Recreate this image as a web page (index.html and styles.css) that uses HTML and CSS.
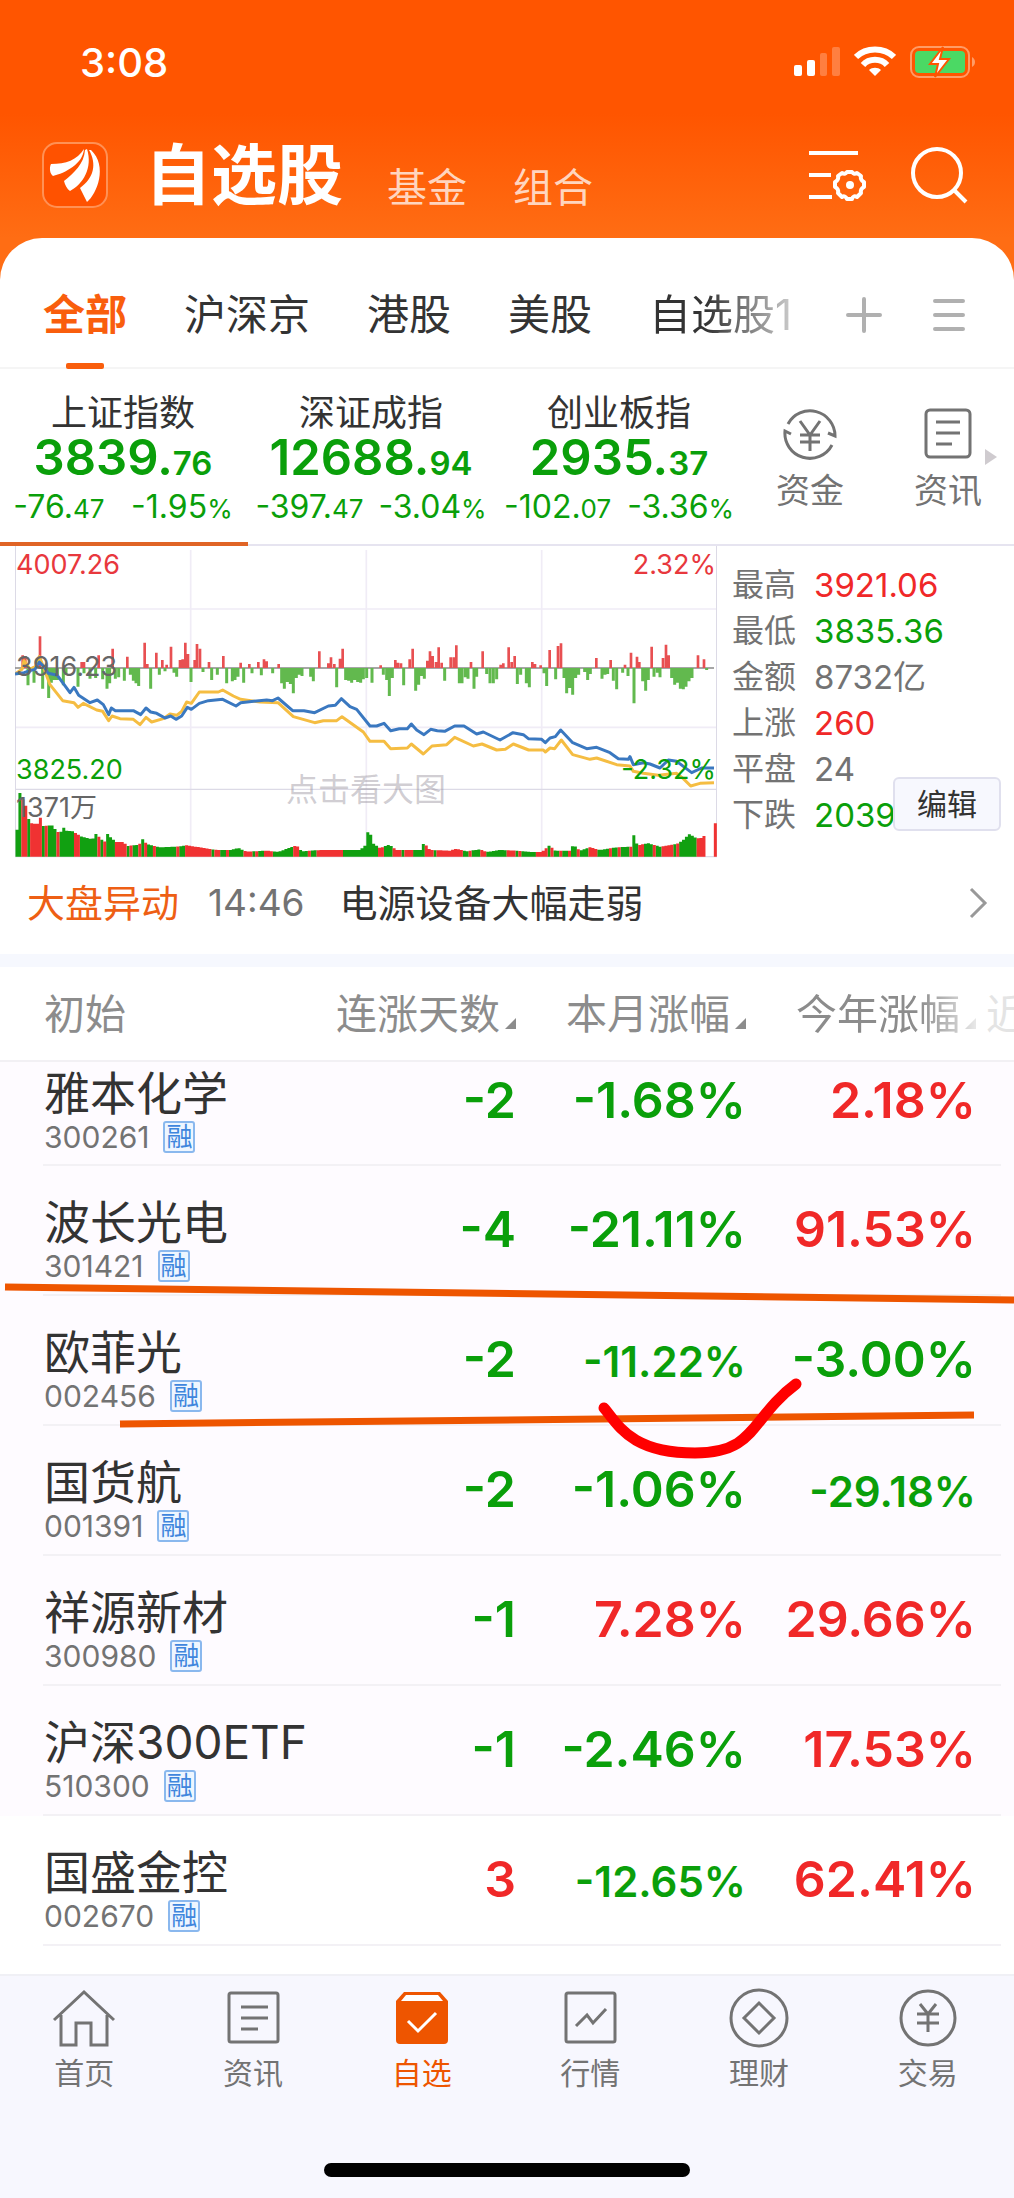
FILE: index.html
```
<!DOCTYPE html>
<html lang="zh-CN">

<head>
    <meta charset="UTF-8">
    <meta name="viewport" content="width=device-width, initial-scale=1.0">
    <title>自选股</title>
    <link rel="stylesheet" href="styles.css">
</head>

<body>
    <header class="app-header">
        <div class="status-bar">
            <span class="time">3:08</span>
            <div class="status-icons">
                <svg width="46" height="30" viewBox="0 0 46 30" fill="#fff">
                    <rect x="0" y="19" width="8" height="11" rx="2" />
                    <rect x="13" y="14" width="8" height="16" rx="2" />
                    <rect x="26" y="7" width="7" height="23" rx="2" opacity=".25" />
                    <rect x="38" y="1" width="8" height="29" rx="2" opacity=".25" />
                </svg>
                <svg width="42" height="30" viewBox="0 0 42 30" fill="none" stroke="#fff" stroke-width="6">
                    <path d="M2 11C12 1 30 1 40 11" />
                    <path d="M9 19C15 12 27 12 33 19" />
                    <path d="M15 24C18 21 24 21 27 24L21 30Z" fill="#fff" stroke="none" />
                </svg>
                <svg width="66" height="32" viewBox="0 0 66 32">
                    <rect x="1" y="1" width="58" height="30" rx="8" fill="none" stroke="#ff9c66" stroke-width="2" />
                    <rect x="5" y="5" width="50" height="22" rx="4" fill="#4bd964" />
                    <path d="M62 11c4 2 4 8 0 10z" fill="#ff9c66" />
                    <path d="M33 1L20 18h8l-3 13L39 13h-9z" fill="#fff" stroke="#ff5500" stroke-width="2" />
                </svg>
            </div>
        </div>
        <div class="title-bar">
            <svg class="logo" width="66" height="66" viewBox="0 0 66 66">
                <rect x="1" y="1" width="64" height="64" rx="14" fill="#ff5200" stroke="#ff9155" stroke-width="2" />
                <g fill="#fff">
                    <path d="M42 7C41 22 23 31 11 34C8 32 7 26 9 22C24 22 35 18 42 7Z" />
                    <path d="M43 8C42 22 32 31 22 39C23 43 25 47 28 49C41 42 51 26 45 7Z" />
                    <path d="M47 8C55 22 52 36 38 46L45 60C55 52 66 24 49 8Z" />
                </g>
            </svg>
            <h1>自选股</h1>
            <a class="switch" href="#">基金</a>
            <a class="switch" href="#">组合</a>
            <button class="icon-btn push" aria-label="列表设置">
                <svg width="58" height="54" viewBox="0 0 58 54" fill="none" stroke="#fff" stroke-width="4">
                    <path d="M1 5h49M1 27h22M1 49h23" />
                    <path d="M34 25q3 2 5-1h5q2 3 5 1l4 3q-1 4 3 6v5q-4 2-3 6l-4 4q-4-2-5 2h-5q-2-4-5-2l-4-4q1-4-3-6v-5q4-2 3-6z" stroke-linejoin="round" />
                    <circle cx="42" cy="37" r="4" fill="#fff" stroke="none" />
                </svg>
            </button>
            <button class="icon-btn" aria-label="搜索">
                <svg width="58" height="58" viewBox="0 0 58 58" fill="none" stroke="#fff" stroke-width="4">
                    <circle cx="27" cy="27" r="24" />
                    <path d="M44 44l12 12" />
                </svg>
            </button>
        </div>
    </header>

    <main class="panel">
        <nav class="tabs">
            <a class="tab active" href="#">全部</a>
            <a class="tab" href="#">沪深京</a>
            <a class="tab" href="#">港股</a>
            <a class="tab" href="#">美股</a>
            <a class="tab fade" href="#">自选股1</a>
            <button class="icon-btn push" aria-label="添加分组">
                <svg width="36" height="36" viewBox="0 0 36 36" stroke="#b0b0b0" stroke-width="4" stroke-linecap="round">
                    <path d="M18 2v32M2 18h32" />
                </svg>
            </button>
            <button class="icon-btn" aria-label="分组菜单">
                <svg width="34" height="36" viewBox="0 0 34 36" stroke="#b0b0b0" stroke-width="4" stroke-linecap="round">
                    <path d="M3 4h28M3 18h28M3 32h28" />
                </svg>
            </button>
        </nav>

        <section class="indices">
            <div class="index current">
                <h2>上证指数</h2>
                <p class="price">3839.<small>76</small></p>
                <p class="change"><span>-76.<small>47</small></span><span>-1.95<small>%</small></span></p>
            </div>
            <div class="index">
                <h2>深证成指</h2>
                <p class="price">12688.<small>94</small></p>
                <p class="change"><span>-397.<small>47</small></span><span>-3.04<small>%</small></span></p>
            </div>
            <div class="index">
                <h2>创业板指</h2>
                <p class="price">2935.<small>37</small></p>
                <p class="change"><span>-102.<small>07</small></span><span>-3.36<small>%</small></span></p>
            </div>
            <div class="shortcuts">
                <a href="#">
                    <svg width="54" height="54" viewBox="0 0 54 54" fill="none" stroke="#737373" stroke-width="3">
                        <path d="M5 17A25 25 0 0 1 52 29L45 26M49 38A25 25 0 0 1 2 24L8 27" />
                        <path d="M17 14l10 14 10-14M27 28v16M17 28h20M17 35h20" />
                    </svg>
                    资金
                </a>
                <a href="#">
                    <svg width="48" height="54" viewBox="0 0 48 54" fill="none" stroke="#737373" stroke-width="3">
                        <rect x="2" y="3" width="44" height="47" rx="4" />
                        <path d="M12 15h24M12 26h24M12 37h16" />
                    </svg>
                    资讯
                </a>
                <span class="more"></span>
            </div>
        </section>

        <section class="market">
            <div class="chart">
                <svg id="chart" viewBox="45 18 2106 936" preserveAspectRatio="none">
                    <path class="grid" d="M45 207H2151M45 562H2151M572 30V950M1099 30V950M1625 30V950" />
                    <path class="frame" d="M46 18V950H2150V18M45 748H2151" />
                    <path class="zero" d="M45 384H2142" />
                    <g id="volume"></g>
                    <g id="momentum"></g>
                    <polyline class="avg" points="45,402 66,388 72,362 90,388 105,380 118,350 130,380 150,434 188,482 222,488 234,502 250,490 290,510 308,514 326,542 336,528 360,536 400,538 420,554 438,532 455,546 490,536 510,522 530,526 545,514 560,486 574,490 598,456 655,456 668,450 700,468 722,478 780,486 834,488 880,530 944,548 970,542 1010,542 1026,530 1090,576 1110,604 1152,604 1172,626 1222,624 1234,612 1270,642 1296,618 1340,614 1364,592 1420,618 1446,612 1490,630 1516,628 1540,612 1586,630 1630,630 1636,636 1650,624 1664,626 1684,600 1718,644 1770,658 1790,654 1850,674 1890,678 1900,694 1930,700 1975,706 2030,700 2050,716 2072,738 2100,730 2142,728" />
                    <polyline class="now" points="45,402 72,398 90,392 105,388 118,366 130,378 145,400 172,406 210,458 222,442 236,466 270,488 292,480 310,494 326,524 334,504 346,512 400,512 422,524 438,504 452,516 470,520 495,534 512,528 528,538 545,528 562,502 574,508 598,490 625,482 668,478 708,498 722,488 800,480 818,482 834,474 878,512 912,512 944,518 985,498 1006,496 1024,476 1050,500 1070,508 1110,558 1130,558 1152,550 1172,572 1198,566 1222,566 1234,552 1250,570 1272,584 1292,568 1312,572 1334,574 1364,558 1392,558 1430,582 1450,576 1500,600 1539,578 1570,584 1585,596 1625,598 1636,608 1650,594 1666,590 1682,570 1718,608 1760,626 1790,622 1830,638 1855,656 1885,658 1890,650 1900,674 1930,668 1950,672 1980,684 2005,660 2030,664 2075,698 2105,684 2142,684" />
                </svg>
                <span class="label top up">4007.26</span>
                <span class="label top right up">2.32%</span>
                <span class="label middle">3916.23</span>
                <span class="label low down">3825.20</span>
                <span class="label low right down">-2.32%</span>
                <span class="label vol">1371万</span>
                <span class="hint">点击看大图</span>
            </div>
            <dl class="stats">
                <div><dt>最高</dt><dd class="up">3921.06</dd></div>
                <div><dt>最低</dt><dd class="down">3835.36</dd></div>
                <div><dt>金额</dt><dd>8732亿</dd></div>
                <div><dt>上涨</dt><dd class="up">260</dd></div>
                <div><dt>平盘</dt><dd>24</dd></div>
                <div><dt>下跌</dt><dd class="down">2039</dd></div>
            </dl>
            <button class="edit">编辑</button>
        </section>

        <a class="news" href="#">
            <strong>大盘异动</strong>
            <time>14:46</time>
            <span>电源设备大幅走弱</span>
            <svg class="push" width="20" height="34" viewBox="0 0 20 34" fill="none" stroke="#999" stroke-width="3">
                <path d="M3 3l14 14L3 31" />
            </svg>
        </a>

        <section class="watchlist">
            <table>
                <thead>
                    <tr>
                        <th class="name">初始</th>
                        <th>连涨天数<i class="sort"></i></th>
                        <th>本月涨幅<i class="sort"></i></th>
                        <th class="fade">今年涨幅<i class="sort"></i></th>
                        <th class="next">近</th>
                    </tr>
                </thead>
                <tbody>
                    <tr>
                        <td class="name"><b>雅本化学</b><span class="code">300261 <em>融</em></span></td>
                        <td class="down">-2</td>
                        <td class="down">-1.68%</td>
                        <td class="up">2.18%</td>
                        <td></td>
                    </tr>
                    <tr>
                        <td class="name"><b>波长光电</b><span class="code">301421 <em>融</em></span></td>
                        <td class="down">-4</td>
                        <td class="down">-21.11%</td>
                        <td class="up">91.53%</td>
                        <td></td>
                    </tr>
                    <tr>
                        <td class="name"><b>欧菲光</b><span class="code">002456 <em>融</em></span></td>
                        <td class="down">-2</td>
                        <td class="down"><small>-11.22%</small></td>
                        <td class="down">-3.00%</td>
                        <td></td>
                    </tr>
                    <tr>
                        <td class="name"><b>国货航</b><span class="code">001391 <em>融</em></span></td>
                        <td class="down">-2</td>
                        <td class="down">-1.06%</td>
                        <td class="down"><small>-29.18%</small></td>
                        <td></td>
                    </tr>
                    <tr>
                        <td class="name"><b>祥源新材</b><span class="code">300980 <em>融</em></span></td>
                        <td class="down">-1</td>
                        <td class="up">7.28%</td>
                        <td class="up">29.66%</td>
                        <td></td>
                    </tr>
                    <tr>
                        <td class="name"><b>沪深300ETF</b><span class="code">510300 <em>融</em></span></td>
                        <td class="down">-1</td>
                        <td class="down">-2.46%</td>
                        <td class="up">17.53%</td>
                        <td></td>
                    </tr>
                    <tr>
                        <td class="name"><b>国盛金控</b><span class="code">002670 <em>融</em></span></td>
                        <td class="up">3</td>
                        <td class="down"><small>-12.65%</small></td>
                        <td class="up">62.41%</td>
                        <td></td>
                    </tr>
                </tbody>
            </table>
            <!-- hand-drawn marks over the list -->
            <svg class="marks" viewBox="0 0 1014 200" preserveAspectRatio="none" fill="none">
                <path d="M5 27L1014 40" stroke="#ee5500" stroke-width="7" />
                <path d="M120 164L974 155" stroke="#ee5500" stroke-width="7" />
                <path d="M604 148C618 164 630 193 695 193C757 193 750 158 796 124" stroke="#ff0000" stroke-width="11" stroke-linecap="round" />
            </svg>
        </section>
    </main>

    <footer class="bottom">
        <nav class="bottom-nav">
            <a href="#">
                <svg width="64" height="62" viewBox="0 0 64 62" fill="none" stroke="#737373" stroke-width="3">
                    <path d="M2 32L32 4L62 32M9 27V57H24V35H39V57H55V27" />
                </svg>
                首页
            </a>
            <a href="#">
                <svg width="64" height="62" viewBox="0 0 64 62" fill="none" stroke="#737373" stroke-width="3">
                    <rect x="8" y="5" width="49" height="49" rx="2" />
                    <path d="M20 19h27M20 30h27M20 41h17" />
                </svg>
                资讯
            </a>
            <a class="active" href="#">
                <svg width="64" height="62" viewBox="0 0 64 62">
                    <path d="M14 4H50L58 13V52Q58 56 54 56H10Q6 56 6 52V13Z" fill="#ee5500" />
                    <path d="M16 7H48L53 13H11Z" fill="#fff" />
                    <path d="M18 33L28 43L46 25" fill="none" stroke="#fff" stroke-width="3" />
                </svg>
                自选
            </a>
            <a href="#">
                <svg width="64" height="62" viewBox="0 0 64 62" fill="none" stroke="#737373" stroke-width="3">
                    <rect x="8" y="5" width="49" height="49" rx="2" />
                    <path d="M18 38L29 27L35 35L48 21" />
                </svg>
                行情
            </a>
            <a href="#">
                <svg width="64" height="62" viewBox="0 0 64 62" fill="none" stroke="#737373" stroke-width="3">
                    <circle cx="32" cy="30" r="28" />
                    <path d="M32 15L47 30L32 45L17 30Z" />
                </svg>
                理财
            </a>
            <a href="#">
                <svg width="64" height="62" viewBox="0 0 64 62" fill="none" stroke="#737373" stroke-width="3">
                    <circle cx="32" cy="30" r="27" />
                    <path d="M24 16L32 26L40 16M32 26V44M21 26H43M21 35H43" />
                </svg>
                交易
            </a>
        </nav>
        <div class="home-indicator"></div>
    </footer>

    <script src="chart.js"></script>
</body>

</html>
```
FILE: styles.css
```
* {
    box-sizing: border-box;
}

body {
    margin: 0;
    min-height: 100vh;
    display: flex;
    flex-direction: column;
    background-color: #f7f7fe;
    font-family: Inter, "Noto Sans CJK SC", sans-serif;
    color: #333;
}

h1,
h2,
p,
dl,
dd {
    margin: 0;
    font-weight: normal;
}

a {
    color: inherit;
    text-decoration: none;
}

svg {
    display: block;
    flex-shrink: 0;
}

.up {
    color: #f02828;
}

.down {
    color: #0a9f0a;
}

.push {
    margin-left: auto;
}

.icon-btn {
    padding: 0;
    border: none;
    background: none;
    cursor: pointer;
}

.icon-btn.push {
    margin-left: auto;
}

/* Header */
.app-header {
    height: 284px;
    margin-bottom: -46px;
    color: #fff;
    background: linear-gradient(#ff5500 40%, #ff6d14 84%);
}

.status-bar {
    display: flex;
    justify-content: space-between;
    align-items: center;
    height: 124px;
    padding: 0 38px 0 80px;
}

.time {
    font-size: 40px;
    font-weight: 500;
}

.status-icons {
    display: flex;
    gap: 14px;
}

.title-bar {
    display: flex;
    align-items: center;
    height: 102px;
    padding: 0 46px 0 42px;
}

h1 {
    margin: 0 44px 0 37px;
    font-size: 66px;
    line-height: 80px;
    font-weight: 700;
}

.switch {
    margin: 26px 46px 0 0;
    font-size: 40px;
    line-height: 50px;
    color: #ffd5bf;
}

.title-bar .icon-btn + .icon-btn {
    margin-left: 44px;
}

/* Group tabs */
.panel {
    border-radius: 42px 42px 0 0;
    background-color: #fff;
}

.tabs {
    display: flex;
    align-items: center;
    height: 131px;
    padding: 0 48px 0 43px;
    border-bottom: 2px solid #f5f5f5;
}

.tab {
    position: relative;
    padding-top: 24px;
    margin-right: 57px;
    font-size: 42px;
    line-height: 60px;
}

.tabs .icon-btn {
    padding-top: 24px;
}

.tabs .tab.fade {
    margin-right: 0;
    color: transparent;
    background: linear-gradient(90deg, #333 40%, #ccc) text;
}

.tabs .icon-btn + .icon-btn {
    margin-left: 50px;
}

.tab.active {
    font-weight: 700;
    color: #f95e0d;
}

.tab.active::after {
    content: "";
    position: absolute;
    left: 23px;
    right: 23px;
    bottom: -24px;
    height: 6px;
    border-radius: 2px;
    background-color: #f95e0d;
}

/* Index quotes */
.indices {
    display: grid;
    grid-template-columns: 248fr 248fr 248fr 270fr;
    height: 177px;
    border-bottom: 2px solid #e6e4f0;
}

.index {
    padding: 21px 2px 0 0;
    margin-bottom: -2px;
    text-align: center;
    color: #0a9f0a;
}

.index.current {
    border-bottom: 4px solid #e06425;
}

.index h2 {
    font-size: 36px;
    line-height: 46px;
    color: #333;
}

.price {
    font-size: 49px;
    line-height: 44px;
    font-weight: 600;
}

.price small {
    font-size: 33px;
}

.change {
    display: flex;
    justify-content: space-around;
    font-size: 32px;
    line-height: 46px;
}

.change small {
    font-size: 26px;
}

.index .change {
    line-height: 44px;
}

.shortcuts {
    position: relative;
    display: flex;
    justify-content: space-between;
    padding: 38px 32px 0 32px;
    font-size: 34px;
    line-height: 60px;
    color: #737373;
}

.shortcuts a {
    display: flex;
    flex-direction: column;
    align-items: center;
}

.more {
    position: absolute;
    right: 17px;
    top: 80px;
    border: 8px solid transparent;
    border-right: none;
    border-left: 12px solid #cfcbcf;
}

/* Intraday chart */
.market {
    position: relative;
    display: flex;
    padding-left: 15px;
}

.chart {
    position: relative;
    flex: 1;
}

#chart {
    width: 100%;
    height: 312px;
    fill: none;
}

.grid {
    stroke: #f0ecf6;
    stroke-width: 5;
}

.frame {
    stroke: #dcdae6;
    stroke-width: 4;
}

.zero {
    stroke: #888;
    stroke-width: 4;
}

.avg,
.now {
    stroke: #f5bd42;
    stroke-width: 9;
    stroke-linejoin: round;
}

.now {
    stroke: #3a78c0;
}

.label {
    position: absolute;
    left: 1px;
    font-size: 27px;
    line-height: 30px;
    color: #666;
}

.label.up {
    color: #e8383d;
}

.label.down {
    color: #0a9f0a;
}

.label.right {
    left: auto;
    right: 1px;
}

.label.top {
    top: 4px;
}

.label.middle {
    top: 106px;
}

.label.low {
    top: 209px;
}

.label.vol {
    top: 247px;
}

.hint {
    position: absolute;
    top: 222px;
    left: 50%;
    margin-left: -80px;
    font-size: 32px;
    line-height: 44px;
    color: rgba(150, 145, 155, .45);
}

.stats {
    width: 297px;
    padding: 16px 0 0 15px;
    font-size: 32px;
    line-height: 46px;
    color: #737373;
}

.stats div {
    display: flex;
    gap: 18px;
}

.stats dd {
    font-size: 33px;
}

.edit {
    position: absolute;
    right: 13px;
    top: 231px;
    width: 108px;
    height: 54px;
    padding: 0;
    border: 2px solid #e0e0ee;
    border-radius: 6px;
    background-color: #f7f8fe;
    font: 30px/48px Inter, "Noto Sans CJK SC", sans-serif;
    color: #333;
}

/* Market news */
.news {
    display: flex;
    align-items: center;
    height: 109px;
    padding: 0 26px 6px 27px;
    border-bottom: 13px solid #f6f8fe;
    font-size: 38px;
    line-height: 50px;
}

.news strong {
    font-weight: normal;
    color: #ee5f14;
}

.news time {
    margin: 0 35px 0 29px;
    font-size: 37px;
    color: #737373;
}

/* Watch list */
.watchlist {
    position: relative;
    padding-bottom: 28px;
}

table {
    width: 100%;
    table-layout: fixed;
    border-collapse: collapse;
}

th,
td {
    width: 230px;
    padding: 0;
    vertical-align: top;
    text-align: right;
    white-space: nowrap;
}

th {
    height: 94px;
    border-bottom: 2px solid #f2f0f4;
    vertical-align: middle;
    font-size: 41px;
    line-height: 54px;
    font-weight: normal;
    color: #8c8c8c;
}

th.name,
td.name {
    width: auto;
    padding-left: 44px;
    text-align: left;
}

th.next {
    width: 38px;
    padding-left: 10px;
    overflow: hidden;
    text-align: left;
    color: #e4e4e4;
}

th.fade {
    mask-image: linear-gradient(90deg, #000 75%, rgba(0, 0, 0, .2));
}

.sort {
    display: inline-block;
    margin-left: 5px;
    border-bottom: 11px solid #8c8c8c;
    border-left: 11px solid transparent;
}

tbody tr {
    height: 130px;
    background: linear-gradient(#f3f1f5, #f3f1f5) no-repeat 43px 100% / calc(100% - 56px) 2px, #fefbff;
}

tbody tr:last-child {
    background-color: #fff;
}

td {
    padding-top: 33px;
    font-size: 50px;
    line-height: 60px;
    font-weight: 600;
}

td small {
    font-size: 42px;
}

td.name {
    padding-top: 28px;
}

/* first row is partly scrolled under the table head */
tbody tr:first-child {
    height: 105px;
}

tbody tr:first-child td {
    padding-top: 8px;
}

tbody tr:first-child td.name {
    padding-top: 3px;
}

td b {
    display: block;
    font-size: 46px;
    line-height: 56px;
    font-weight: normal;
}

.code {
    display: flex;
    align-items: center;
    gap: 14px;
    height: 32px;
    font-size: 30px;
    line-height: 32px;
    font-weight: normal;
    color: #737373;
}

.code em {
    width: 32px;
    height: 32px;
    border: 2px solid #8ab8ee;
    border-radius: 3px;
    background-color: #eef6ff;
    font-size: 26px;
    line-height: 27px;
    font-style: normal;
    text-align: center;
    color: #3f86dd;
}

.marks {
    position: absolute;
    top: 293px;
    left: 0;
    width: 100%;
    height: 200px;
    pointer-events: none;
}

/* Bottom navigation */
.bottom {
    flex: 1;
    border-top: 2px solid #f0f0f5;
}

.bottom-nav {
    display: grid;
    grid-template-columns: repeat(6, 1fr);
    padding: 12px 2px 0 0;
    font-size: 30px;
    line-height: 46px;
    color: #737373;
}

.bottom-nav a {
    display: flex;
    flex-direction: column;
    align-items: center;
}

.bottom-nav .active {
    color: #ee5500;
}

.home-indicator {
    width: 36%;
    height: 14px;
    margin: 67px auto 20px;
    border-radius: 7px;
    background-color: #000;
}
```
FILE: chart.js
```
const SVG_NS = 'http://www.w3.org/2000/svg';
const ZERO = 384;
const BASE = 950;

// [x, height] of the bars above and below the zero line
const above = [[68,38],[76,36],[120,95],[245,18],[252,18],[296,38],[338,58],[382,34],[434,76],[442,12],[469,46],[487,24],[500,10],[513,64],[540,24],[548,26],[556,76],[564,42],[584,24],[591,72],[600,58],[627,18],[670,36],[722,16],[748,12],[775,18],[792,26],[800,20],[836,12],[958,50],[985,14],[993,32],[1003,12],[1020,28],[1028,58],[1142,8],[1186,24],[1194,16],[1203,14],[1229,26],[1238,58],[1282,22],[1290,50],[1298,36],[1308,18],[1316,62],[1325,16],[1352,32],[1361,32],[1369,68],[1413,18],[1448,50],[1502,10],[1510,14],[1526,62],[1535,18],[1544,36],[1597,18],[1605,12],[1622,8],[1649,54],[1674,66],[1683,74],[1789,30],[1832,24],[1875,10],[1893,46],[1911,34],[1918,18],[1955,64],[1989,30],[1998,70],[2006,38],[2094,38],[2112,26]];
const below = [[84,52],[102,44],[128,62],[146,90],[154,44],[163,36],[172,36],[190,52],[198,20],[234,56],[252,16],[270,32],[287,30],[308,34],[321,62],[329,46],[346,32],[356,28],[373,38],[391,20],[400,38],[408,46],[416,54],[452,62],[478,20],[495,10],[522,14],[530,26],[573,42],[609,12],[635,36],[652,20],[680,46],[697,40],[705,36],[714,26],[731,44],[756,16],[784,22],[818,16],[845,46],[853,62],[862,42],[871,48],[880,76],[889,30],[898,20],[906,24],[932,26],[940,40],[1010,58],[1037,36],[1046,38],[1055,44],[1064,36],[1073,42],[1082,44],[1090,34],[1100,30],[1116,44],[1150,20],[1160,36],[1168,84],[1177,30],[1211,52],[1247,68],[1256,50],[1265,24],[1273,32],[1334,38],[1378,46],[1386,46],[1396,28],[1404,32],[1422,62],[1430,26],[1460,18],[1470,46],[1480,46],[1490,34],[1552,48],[1562,20],[1579,46],[1588,58],[1632,16],[1640,54],[1667,34],[1692,30],[1700,76],[1709,60],[1718,80],[1727,30],[1736,20],[1754,12],[1763,36],[1771,18],[1806,32],[1815,20],[1823,18],[1840,38],[1850,64],[1868,14],[1884,24],[1902,106],[1928,40],[1937,68],[1945,36],[1962,26],[1972,14],[1980,28],[2015,30],[2024,50],[2032,44],[2041,62],[2050,64],[2058,56],[2067,40],[2076,30],[2120,6]];

// volume outline and the stretches drawn in red
const volume = [[50,68],[60,194],[68,172],[76,160],[84,116],[94,100],[112,98],[120,120],[129,92],[156,94],[172,74],[182,74],[190,88],[200,78],[218,76],[245,60],[278,52],[286,70],[304,52],[313,42],[321,70],[332,58],[348,44],[370,44],[382,32],[418,36],[427,54],[440,38],[480,28],[530,30],[560,34],[600,28],[650,20],[690,20],[715,26],[740,15],[800,18],[835,14],[860,24],[890,34],[905,16],[960,20],[1030,20],[1080,20],[1098,36],[1107,98],[1116,42],[1140,26],[1168,36],[1190,20],[1262,20],[1272,42],[1290,20],[1350,18],[1369,24],[1400,16],[1440,22],[1460,14],[1500,20],[1550,18],[1590,14],[1625,14],[1649,34],[1665,18],[1710,18],[1720,36],[1740,18],[1770,28],[1800,20],[1850,28],[1893,30],[1902,66],[1912,34],[1945,40],[1980,30],[2030,38],[2050,50],[2067,68],[2085,58],[2100,54],[2118,66]];
const redRanges = [[64,80],[88,104],[112,122],[132,140],[168,182],[224,236],[290,300],[310,317],[332,340],[346,376],[386,400],[412,422],[432,440],[456,470],[508,514],[532,540],[554,580],[584,604],[610,636],[646,664],[680,690],[700,706],[730,756],[762,772],[790,815],[880,900],[926,934],[954,1030],[1130,1152],[1176,1206],[1212,1236],[1276,1300],[1312,1392],[1404,1412],[1444,1456],[1516,1545],[1555,1560],[1610,1645],[1650,1660],[1680,1690],[1704,1710],[1728,1740],[1764,1795],[1824,1834],[1850,1858],[1888,1900],[1912,1928],[1960,1968],[1984,2016],[2028,2036],[2088,2104],[2108,2116]];

function addPath(groupId, d, color, width) {
    const path = document.createElementNS(SVG_NS, 'path');
    path.setAttribute('d', d);
    path.setAttribute('stroke', color);
    path.setAttribute('stroke-width', width);
    document.getElementById(groupId).appendChild(path);
}

function volumeAt(x) {
    const i = volume.findIndex((p) => p[0] >= x);
    if (i <= 0) return volume[0][1];
    const [x0, h0] = volume[i - 1];
    const [x1, h1] = volume[i];
    return h0 + (h1 - h0) * (x - x0) / (x1 - x0);
}

addPath('momentum', above.map(([x, h]) => `M${x} ${ZERO}v${-h}`).join(''), '#e85052', 8);
addPath('momentum', below.map(([x, h]) => `M${x} ${ZERO}v${h}`).join(''), '#62b94e', 9);

let red = 'M2146 950v-100';
let green = '';
for (let i = 0; i < 236; i++) {
    const x = 51 + i * 8.77;
    const bar = `M${x.toFixed(1)} ${BASE}v${-volumeAt(x).toFixed(1)}`;
    if (redRanges.some(([a, b]) => x >= a && x <= b)) {
        red += bar;
    } else {
        green += bar;
    }
}
addPath('volume', green, '#11a011', 9);
addPath('volume', red, '#f03232', 9);
```
